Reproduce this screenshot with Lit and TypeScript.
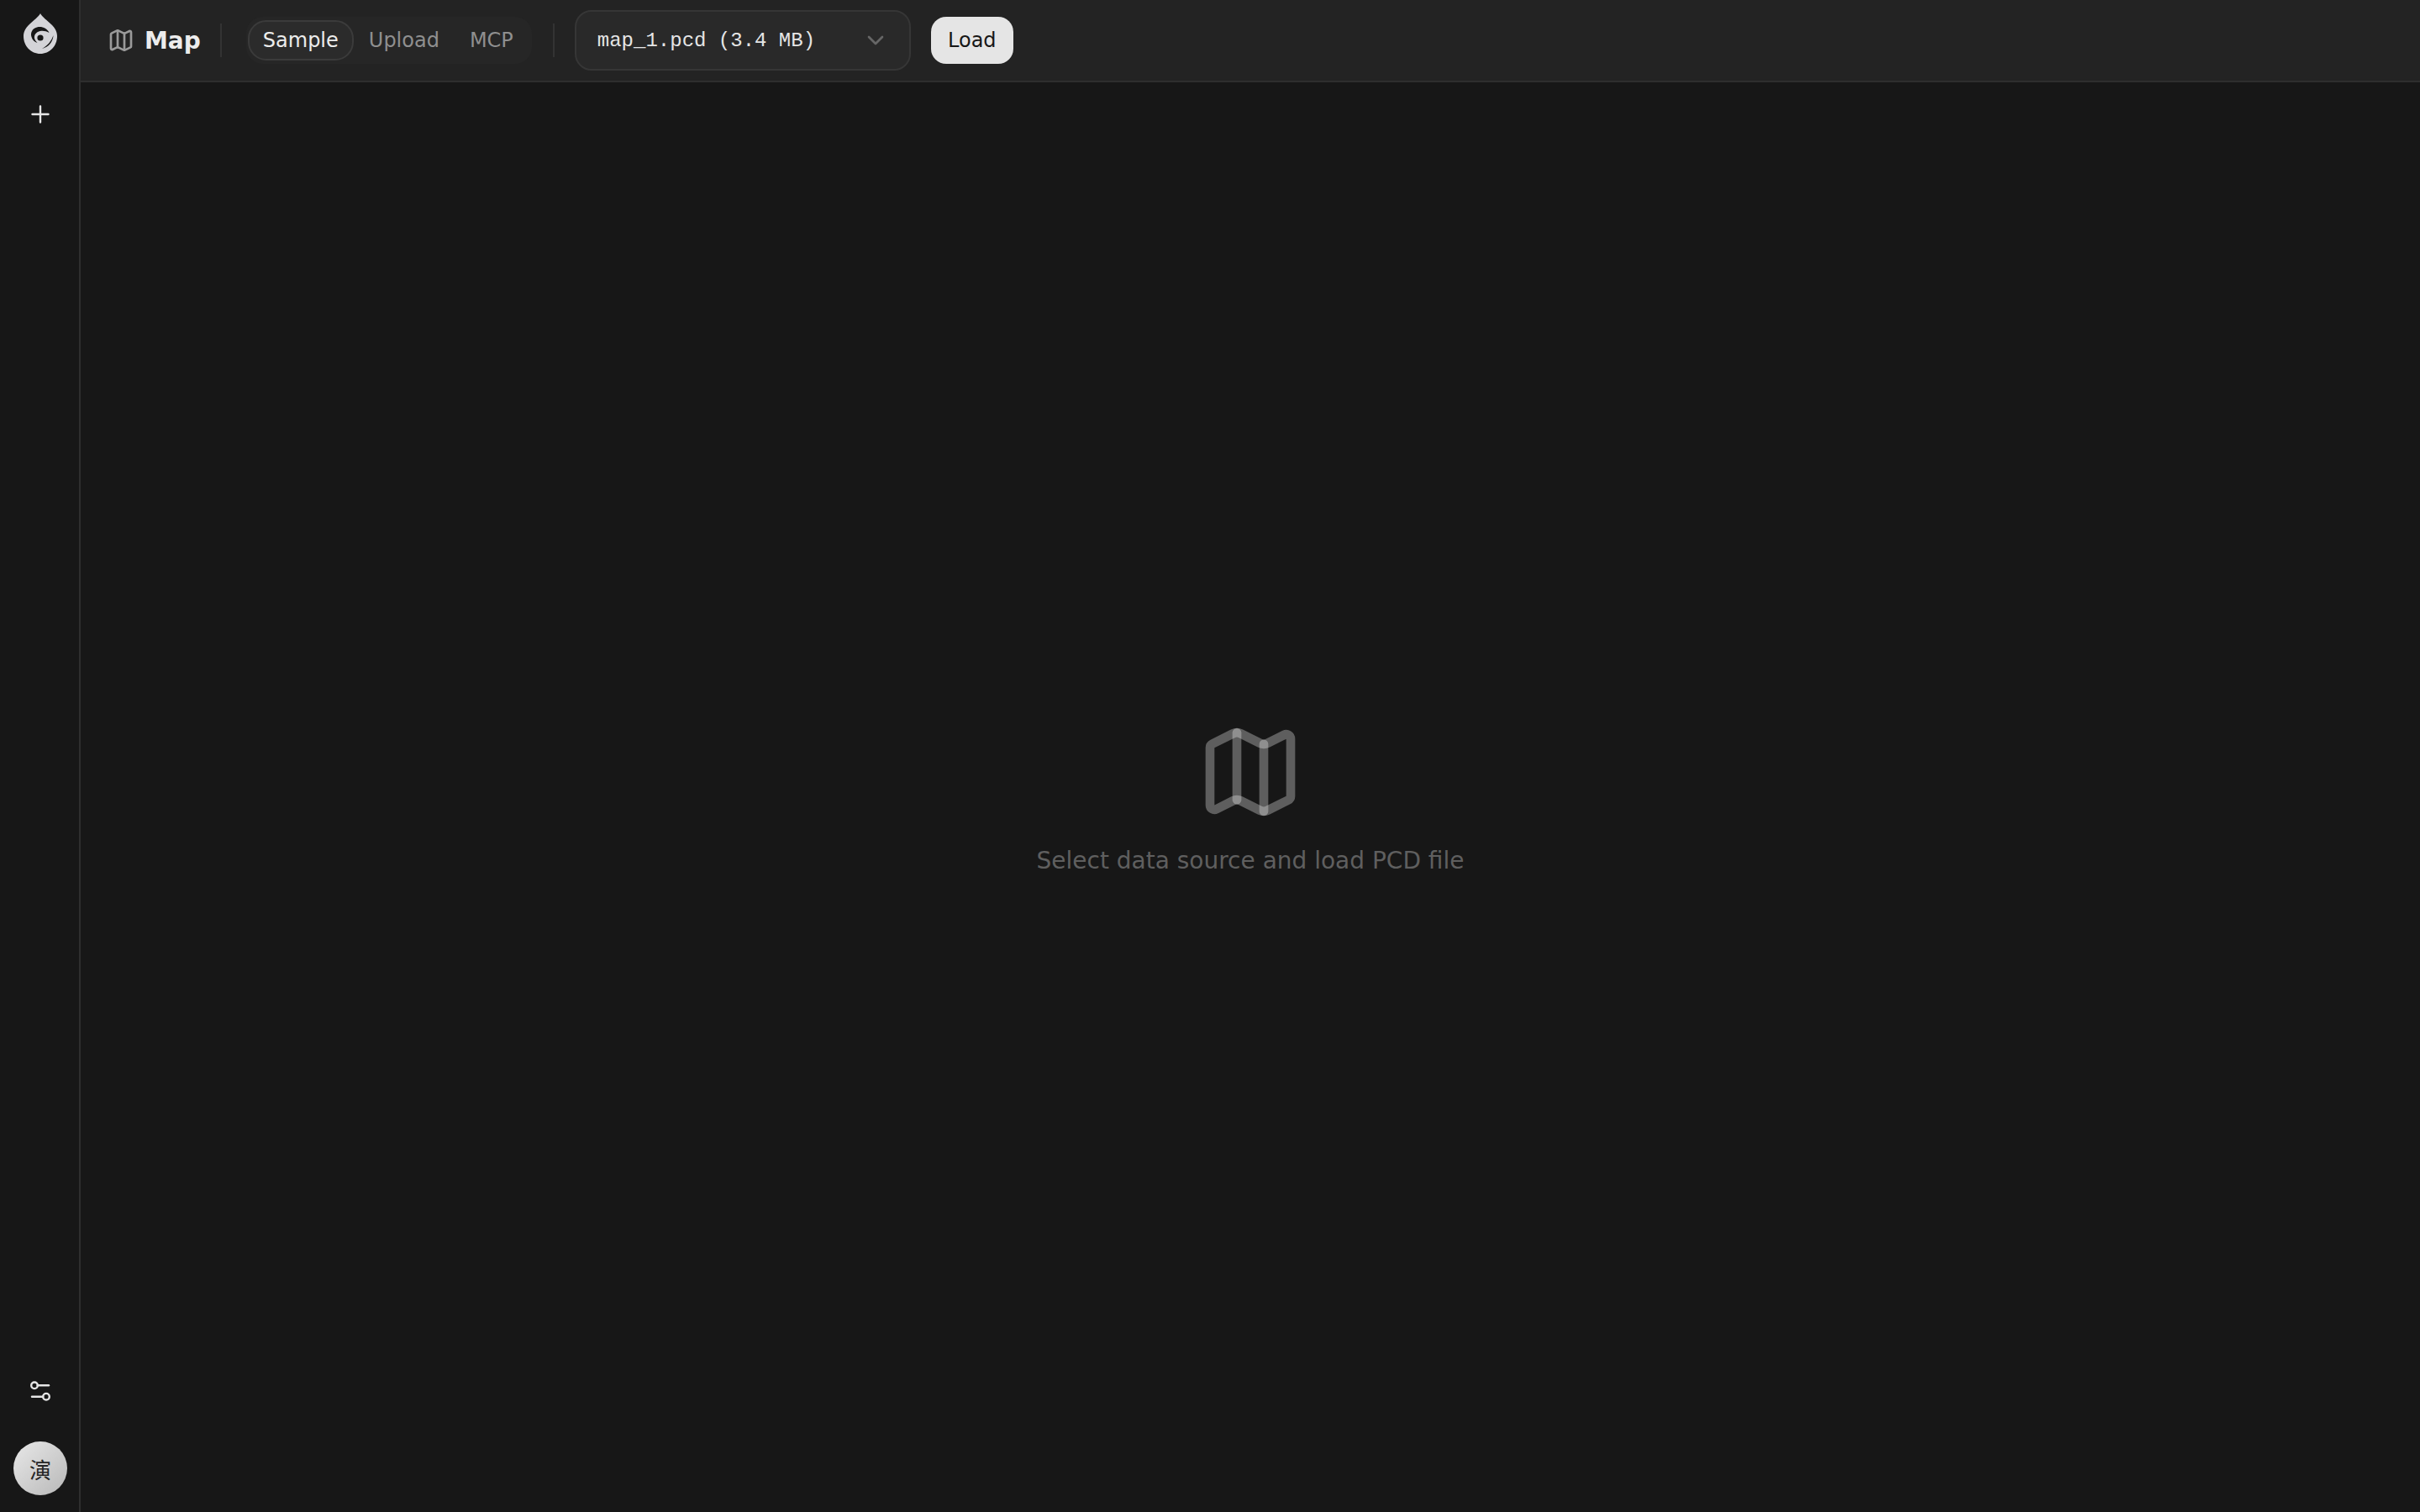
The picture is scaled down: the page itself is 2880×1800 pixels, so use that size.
import { LitElement, html, css } from "lit";
import { customElement } from "lit/decorators.js";

const mapIcon = (cls: string) => html`<svg class=${cls} viewBox="0 0 24 24" fill="none" stroke-width="2" stroke-linecap="round" stroke-linejoin="round">
  <path d="M14.106 5.553a2 2 0 0 0 1.788 0l3.659-1.83A1 1 0 0 1 21 4.619v12.764a1 1 0 0 1-.553.894l-4.553 2.277a2 2 0 0 1-1.788 0l-4.212-2.106a2 2 0 0 0-1.788 0l-3.659 1.83A1 1 0 0 1 3 19.381V6.618a1 1 0 0 1 .553-.894l4.553-2.277a2 2 0 0 1 1.788 0z"></path>
  <path d="M15 5.764v15"></path>
  <path d="M9 3.236v15"></path>
</svg>`;

@customElement("app-root")
export class AppRoot extends LitElement {
  static styles = css`
    :host { display: flex; width: 2880px; height: 1800px; background: #171717; font-family: "DejaVu Sans", sans-serif; color: #e5e5e5; overflow: hidden; }
    .rail { box-sizing: border-box; width: 96px; flex: none; border-right: 2px solid #2e2e2e; display: flex; flex-direction: column; align-items: center; padding: 16px 0 20px 2px; }
    .logo { width: 40px; height: 48px; display: block; margin-bottom: 56px; }
    .plus { width: 32px; height: 32px; display: block; }
    .spacer { flex: 1; }
    .tune { width: 32px; height: 32px; display: block; margin-bottom: 44px; }
    .avatar { width: 64px; height: 64px; border-radius: 50%; background: linear-gradient(135deg, #e8e8e8, #b8b8b8); color: #262626; font: 26px "Noto Sans CJK SC", sans-serif; display: flex; align-items: center; justify-content: center; }
    .main { flex: 1; display: flex; flex-direction: column; min-width: 0; }
    .bar { box-sizing: border-box; height: 98px; flex: none; background: #232323; border-bottom: 2px solid #2e2e2e; display: flex; align-items: center; padding: 0 32px; }
    .bar-icon { width: 32px; height: 32px; stroke: #9a9a9a; flex: none; }
    .title { font-size: 28px; font-weight: 700; margin-left: 12px; color: #ececec; }
    .divider { width: 2px; height: 40px; background: #333; flex: none; }
    .d1 { margin-left: 23px; margin-right: 29px; }
    .tabs { display: flex; background: #262626; border-radius: 20px; padding: 4px 0 4px 2px; height: 48px; width: 338px; box-sizing: content-box; flex: none; }
    .tab { font-size: 24px; color: #8f8f8f; display: flex; align-items: center; padding: 0 16px; border: 2px solid transparent; border-radius: 22px; }
    .tab.on { color: #ececec; background: #2b2b2b; border-color: #3b3b3b; }
    .d2 { margin-left: 25px; margin-right: 24px; }
    .select { box-sizing: border-box; width: 400px; height: 72px; flex: none; background: #292929; border: 2px solid #363636; border-radius: 20px; display: flex; align-items: center; justify-content: space-between; padding: 0 24px 0 25px; font: 24px "Liberation Mono", monospace; color: #e5e5e5; }
    .chev { width: 32px; height: 32px; }
    .load { box-sizing: border-box; width: 98px; height: 56px; margin-left: 24px; flex: none; background: #e5e5e5; color: #171717; border-radius: 18px; font-size: 24px; display: flex; align-items: center; justify-content: center; }
    .stage { flex: 1; display: flex; flex-direction: column; align-items: center; justify-content: center; padding-bottom: 2px; }
    .big { width: 128px; height: 128px; stroke: rgba(255,255,255,.31); display: block; }
    .hint { margin-top: 25px; font-size: 28px; color: #5f5f5f; }
  `;

  render() {
    return html`
      <nav class="rail">
        <svg class="logo" viewBox="0 0 40 48">
          <path fill="#d4d4d8" d="M20 0C22 4 28 8 33 13C38 18 40 22 40 27C40 39 31 48 20 48C9 48 0 39 0 27C0 22 2 18 7 13C12 8 18 4 20 0Z"></path>
          <path fill="#171717" d="M30.500 23C28 17.500 21.500 15 16 16.500C10 18 8 23.500 9.500 28C10.500 31.500 13 34 16.500 35C13.500 32 12 29 13.500 25.500C15.500 21 23.500 18.500 30.500 23Z"></path>
          <path fill="#171717" d="M22 42C30 40 35 34 35.500 26C33 33 29 38 22 42Z"></path>
          <circle cx="20" cy="29" r="3.600" fill="#171717"></circle>
        </svg>
        <svg class="plus" viewBox="0 0 32 32" stroke="#e5e5e5" stroke-width="2.4" stroke-linecap="round"><path d="M16 6.500V25.500M6.500 16H25.500"></path></svg>
        <div class="spacer"></div>
        <svg class="tune" viewBox="0 0 32 32" fill="none" stroke="#e5e5e5" stroke-width="2.4" stroke-linecap="round">
          <circle cx="9" cy="9.300" r="3.800"></circle><path d="M12.800 9.300H26"></path>
          <circle cx="23" cy="22.700" r="3.800"></circle><path d="M6 22.700H19.200"></path>
        </svg>
        <div class="avatar">演</div>
      </nav>
      <div class="main">
        <header class="bar">
          ${mapIcon("bar-icon")}
          <span class="title">Map</span>
          <span class="divider d1"></span>
          <div class="tabs">
            <span class="tab on">Sample</span><span class="tab">Upload</span><span class="tab">MCP</span>
          </div>
          <span class="divider d2"></span>
          <div class="select">
            <span>map_1.pcd (3.4 MB)</span>
            <svg class="chev" viewBox="0 0 24 24" fill="none" stroke="#666" stroke-width="2" stroke-linecap="round" stroke-linejoin="round"><path d="M6 9l6 6 6-6"></path></svg>
          </div>
          <div class="load">Load</div>
        </header>
        <main class="stage">
          ${mapIcon("big")}
          <div class="hint">Select data source and load PCD file</div>
        </main>
      </div>
    `;
  }
}
